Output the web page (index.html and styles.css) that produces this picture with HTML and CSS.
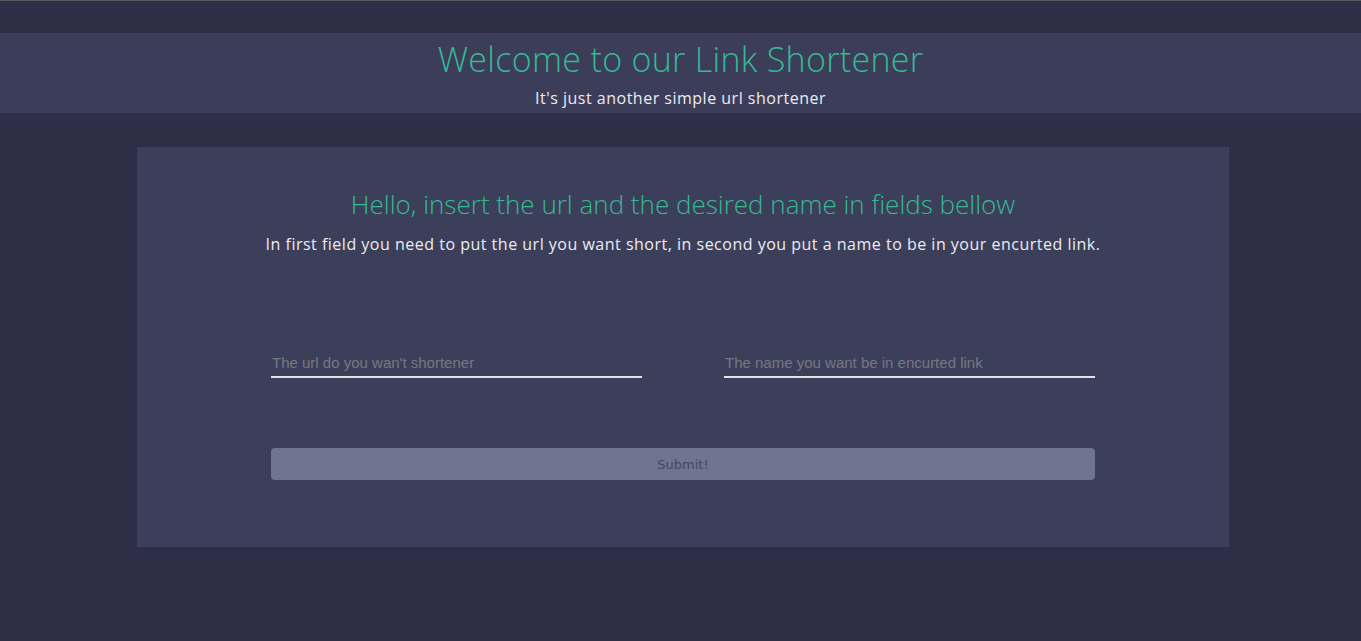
FILE: index.html
```html
<!DOCTYPE html>
<html lang="en">
<head>
<meta charset="utf-8">
<title>Link Shortener</title>
<link rel="stylesheet" href="styles.css">
</head>
<body>
<div class="topline"></div>
<header class="hero">
  <h1 class="hero-title">Welcome to our Link Shortener</h1>
  <p class="hero-sub">It's just another simple url shortener</p>
</header>
<main class="card">
  <h2 class="card-title">Hello, insert the url and the desired name in fields bellow</h2>
  <p class="card-text">In first field you need to put the url you want short, in second you put a name to be in your encurted link.</p>
  <form class="form">
    <div class="fields">
      <input class="field" type="text" placeholder="The url do you wan't shortener">
      <input class="field" type="text" placeholder="The name you want be in encurted link">
    </div>
    <button class="submit" type="button">Submit!</button>
  </form>
</main>
</body>
</html>
```
FILE: styles.css
```css
html, body {
  margin: 0;
  padding: 0;
}
body {
  background: #2e2f47;
  min-height: 641px;
  font-family: "Open Sans", "Liberation Sans", sans-serif;
}
.topline {
  height: 1px;
  background: #5b5b5f;
}
.hero {
  margin-top: 32px;
  height: 80px;
  background: #3c3e59;
  display: flex;
  flex-direction: column;
  align-items: center;
  box-sizing: border-box;
  padding-top: 6px;
}
.hero-title {
  margin: 0;
  font-weight: 300;
  font-size: 34px;
  line-height: 40px;
  letter-spacing: 0.3px;
  color: #37b893;
}
.hero-sub {
  margin: 9px 0 0;
  font-size: 16px;
  line-height: 20px;
  letter-spacing: 0.5px;
  color: #ecebf2;
}
.card {
  margin: 34px 0 0 137px;
  width: 1092px;
  height: 400px;
  box-sizing: border-box;
  padding: 40px 134px 0;
  background: #3c3f5a;
  display: flex;
  flex-direction: column;
  align-items: center;
}
.card-title {
  margin: 0;
  font-weight: 300;
  font-size: 26px;
  line-height: 34px;
  color: #37b893;
}
.card-text {
  margin: 13px 0 0;
  font-size: 16px;
  line-height: 20px;
  letter-spacing: 0.5px;
  color: #ecebf2;
  white-space: nowrap;
}
.form {
  align-self: stretch;
  display: flex;
  flex-direction: column;
}
.fields {
  margin-top: 94px;
  display: flex;
  justify-content: space-between;
}
.field {
  width: 371px;
  box-sizing: border-box;
  height: 30px;
  padding: 0 1px;
  background: transparent;
  border: none;
  border-bottom: 2px solid #e3e3e6;
  outline: none;
  font-family: "Liberation Sans", Arial, sans-serif;
  font-size: 15px;
  color: #ddd;
}
.field::placeholder {
  color: #777780;
}
.submit {
  margin-top: 70px;
  height: 32px;
  border: none;
  border-radius: 4px;
  background: #6f7591;
  color: #44475f;
  font-family: "DejaVu Sans", Verdana, sans-serif;
  font-size: 13px;
}
```
